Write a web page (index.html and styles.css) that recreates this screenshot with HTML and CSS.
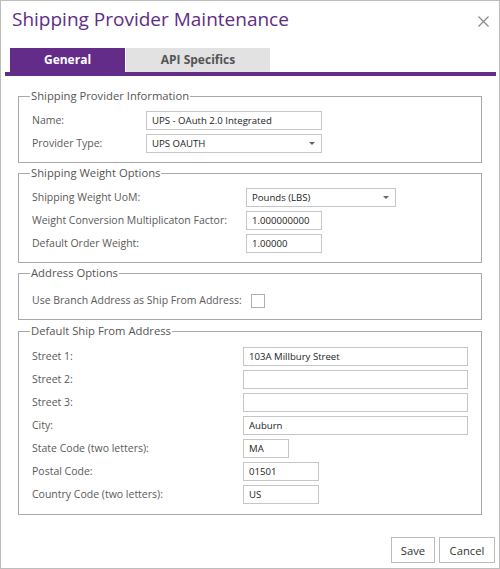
FILE: index.html
```html
<!DOCTYPE html>
<html lang="en">
<head>
<meta charset="utf-8">
<title>Shipping Provider Maintenance</title>
<link rel="stylesheet" href="styles.css">
</head>
<body>
<div class="dialog">
  <header class="header">
    <h1 class="title">Shipping Provider Maintenance</h1>
    <button class="close" aria-label="Close">
      <svg width="11" height="11" viewBox="0 0 11 11"><path d="M0.5 0.5 L10.5 10.5 M10.5 0.5 L0.5 10.5" stroke="#8a8a8a" stroke-width="1.2" fill="none"/></svg>
    </button>
  </header>

  <nav class="tabs">
    <div class="tab tab-general active">General</div>
    <div class="tab tab-api">API Specifics</div>
  </nav>

  <fieldset class="group g1">
    <legend>Shipping Provider Information</legend>
    <div class="form f1">
      <label>Name:</label>
      <input class="field w176" value="UPS - OAuth 2.0 Integrated">
      <label>Provider Type:</label>
      <div class="field select w176"><span>UPS OAUTH</span><span class="caret"></span></div>
    </div>
  </fieldset>

  <fieldset class="group g2">
    <legend>Shipping Weight Options</legend>
    <div class="form f2">
      <label>Shipping Weight UoM:</label>
      <div class="field select w150"><span>Pounds (LBS)</span><span class="caret"></span></div>
      <label>Weight Conversion Multiplicaton Factor:</label>
      <input class="field w76" value="1.000000000">
      <label>Default Order Weight:</label>
      <input class="field w76" value="1.00000">
    </div>
  </fieldset>

  <fieldset class="group g3">
    <legend>Address Options</legend>
    <div class="form f3">
      <label>Use Branch Address as Ship From Address:</label>
      <input type="checkbox" class="check">
    </div>
  </fieldset>

  <fieldset class="group g4">
    <legend>Default Ship From Address</legend>
    <div class="form f4">
      <label>Street 1:</label>
      <input class="field w225" value="103A Millbury Street">
      <label>Street 2:</label>
      <input class="field w225" value="">
      <label>Street 3:</label>
      <input class="field w225" value="">
      <label>City:</label>
      <input class="field w225" value="Auburn">
      <label>State Code (two letters):</label>
      <input class="field w46" value="MA">
      <label>Postal Code:</label>
      <input class="field w76" value="01501">
      <label>Country Code (two letters):</label>
      <input class="field w76" value="US">
    </div>
  </fieldset>

  <footer class="actions">
    <button class="btn btn-save">Save</button>
    <button class="btn btn-cancel">Cancel</button>
  </footer>
</div>
</body>
</html>
```

FILE: styles.css
```css
html, body {
  margin: 0;
  padding: 0;
  background: #ffffff;
}

body {
  font-family: "Open Sans", "Noto Sans", sans-serif;
  color: #555555;
}

.dialog {
  width: 500px;
  height: 569px;
  box-sizing: border-box;
  border: 1px solid #bdbdbd;
  display: flex;
  flex-direction: column;
  background: #ffffff;
}

/* header */
.header {
  height: 47px;
  box-sizing: border-box;
  padding: 5px 10px 0 11px;
  display: flex;
  justify-content: space-between;
  align-items: flex-start;
}

.title {
  margin: 0;
  font-size: 19px;
  line-height: 26px;
  font-weight: 400;
  color: #5e2d86;
}

.close {
  margin-top: 10px;
  padding: 0;
  border: 0;
  background: transparent;
  width: 11px;
  height: 11px;
  display: flex;
}

/* tabs */
.tabs {
  display: flex;
  gap: 1px;
  margin: 0 3px 0 4px;
  padding-left: 5px;
  border-bottom: 4px solid #622c88;
}

.tab {
  height: 24px;
  line-height: 24px;
  text-align: center;
  font-size: 12px;
  font-weight: 700;
}

.tab-general {
  width: 115px;
  background: #622c88;
  color: #ffffff;
}

.tab-api {
  width: 144px;
  background: #e2e2e2;
  color: #555555;
}

/* groups */
.group {
  margin: 2px 17px 0;
  padding: 7px 13px 9px;
  border: 1px solid #a9a9a9;
  min-inline-size: 0;
}

.group legend {
  margin-left: -2px;
  padding: 0 1px;
  font-size: 11.25px;
  line-height: 16px;
  color: #555555;
}

.g1 { margin-top: 12px; }
.g3 { padding-top: 10px; }
.g4 { margin-top: 3px; padding-top: 8px; padding-bottom: 10px; }

.form {
  display: grid;
  row-gap: 4px;
  align-items: center;
  justify-items: start;
}

.f1 { grid-template-columns: 114px auto; }
.f2 { grid-template-columns: 214px auto; }
.f3 { grid-template-columns: 219px auto; }
.f4 { grid-template-columns: 211px auto; }

.form label {
  font-size: 10.5px;
  line-height: 19px;
  color: #5a5a5a;
  white-space: nowrap;
}

.field {
  box-sizing: border-box;
  height: 19px;
  margin: 0;
  padding: 0 5px;
  border: 1px solid #c6c6c6;
  background: #ffffff;
  font-family: "Open Sans", "Noto Sans", sans-serif;
  font-size: 9.6px;
  color: #222222;
  outline: none;
}

.select {
  display: flex;
  align-items: center;
  justify-content: space-between;
  padding-right: 6px;
  line-height: 17px;
}

.caret {
  width: 0;
  height: 0;
  border-left: 3px solid transparent;
  border-right: 3px solid transparent;
  border-top: 3px solid #666666;
}

.w176 { width: 176px; }
.w150 { width: 150px; }
.w76 { width: 76px; }
.w225 { width: 225px; }
.w46 { width: 46px; }

.check {
  appearance: none;
  -webkit-appearance: none;
  width: 14px;
  height: 14px;
  margin: 0;
  border: 1px solid #b0b0b0;
  background: #ffffff;
  box-sizing: border-box;
}

/* footer */
.actions {
  display: flex;
  justify-content: flex-end;
  gap: 4px;
  margin-top: 22px;
  padding-right: 4px;
}

.btn {
  height: 26px;
  padding: 0;
  border: 1px solid #bbbbbb;
  background: #ffffff;
  font-family: "Open Sans", "Noto Sans", sans-serif;
  font-size: 11.25px;
  color: #333333;
}

.btn-save { width: 44px; }
.btn-cancel { width: 56px; }
```
